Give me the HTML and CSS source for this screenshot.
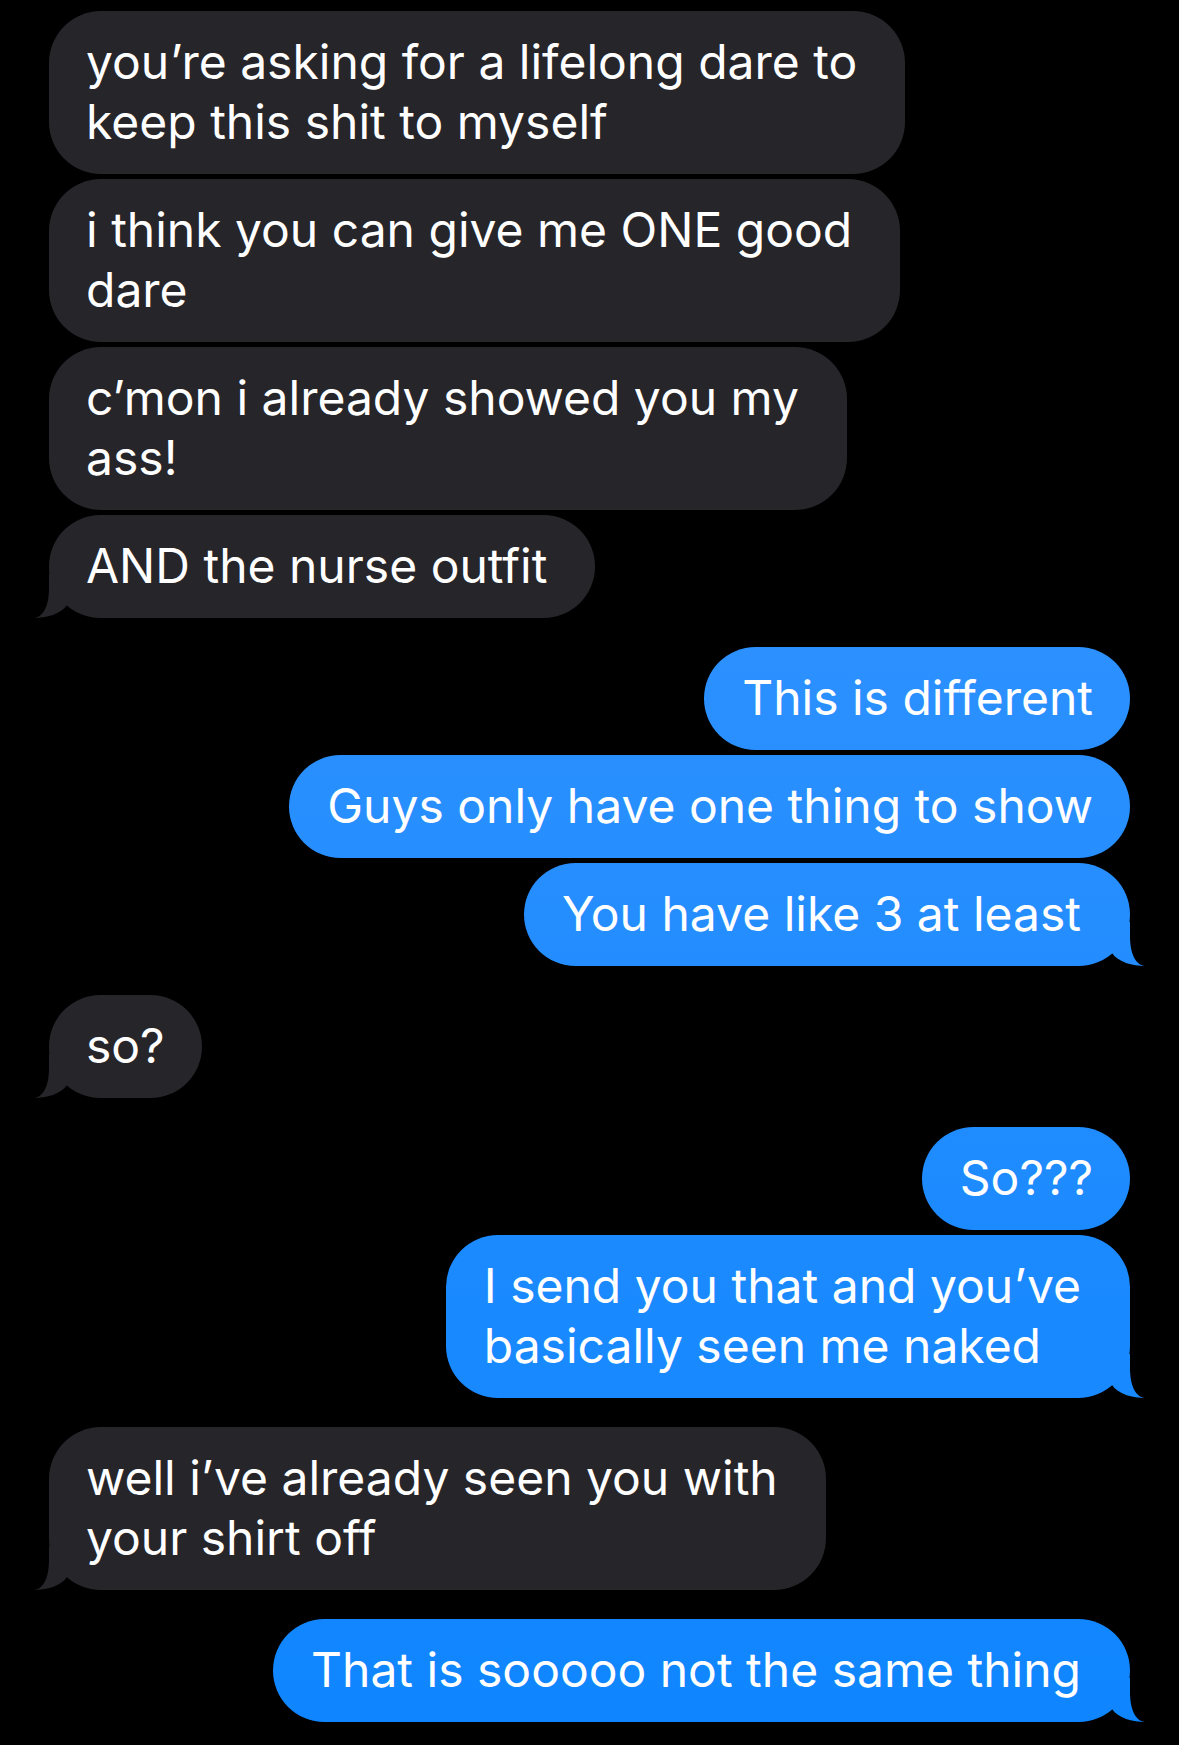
FILE: index.html
```html
<!DOCTYPE html>
<html lang="en">
<head>
<meta charset="utf-8">
<title>Messages</title>
<link rel="stylesheet" href="styles.css">
</head>
<body>
<main class="thread">
  <section class="group in">
    <p class="bubble">you’re asking for a lifelong dare to<br>keep this shit to myself</p>
    <p class="bubble">i think you can give me ONE good<br>dare</p>
    <p class="bubble">c’mon i already showed you my<br>ass!</p>
    <p class="bubble tail">AND the nurse outfit</p>
  </section>
  <section class="group out">
    <p class="bubble">This is different</p>
    <p class="bubble">Guys only have one thing to show</p>
    <p class="bubble tail">You have like 3 at least</p>
  </section>
  <section class="group in">
    <p class="bubble tail short">so?</p>
  </section>
  <section class="group out">
    <p class="bubble">So???</p>
    <p class="bubble tail">I send you that and you’ve<br>basically seen me naked</p>
  </section>
  <section class="group in">
    <p class="bubble tail">well i’ve already seen you with<br>your shirt off</p>
  </section>
  <section class="group out">
    <p class="bubble tail">That is sooooo not the same thing</p>
  </section>
</main>
</body>
</html>
```
FILE: styles.css
```css
html,
body {
  margin: 0;
  padding: 0;
  background: #000;
}

body {
  width: 1179px;
  height: 1745px;
  overflow: hidden;
  font-family: Inter, "Noto Sans", "Liberation Sans", sans-serif;
}

.thread {
  display: flex;
  flex-direction: column;
  gap: 29px;
  padding: 11px 49px 0;
}

.group {
  display: flex;
  flex-direction: column;
  gap: 5px;
}

.group.in {
  align-items: flex-start;
}

.group.out {
  align-items: flex-end;
}

.bubble {
  position: relative;
  isolation: isolate;
  margin: 0;
  font-size: 48px;
  line-height: 60px;
  font-weight: 400;
  color: #fff;
  white-space: nowrap;
  border-radius: 52px;
}

.in .bubble {
  background: #262529;
  padding: 21px 48px 22px 37px;
}

.in .bubble.short {
  padding-right: 37px;
}

.out .bubble {
  background: linear-gradient(to bottom, #3e97ff 0px, #0e85ff 1745px) fixed;
  padding: 21px 37px 22px 38px;
}

.out .bubble.tail {
  padding-right: 49px;
}

.bubble.tail::before {
  content: "";
  position: absolute;
  z-index: -1;
  bottom: 0;
  width: 40px;
  height: 44px;
}

.in .bubble.tail::before {
  left: -16px;
  background: #262529;
  clip-path: path("M 0 44 C 9 44, 16 34, 16 14 L 16 0 L 40 0 L 40 30 L 34 31 C 28 40, 14 44, 0 44 Z");
}

.out .bubble.tail::before {
  right: -16px;
  background: linear-gradient(to bottom, #3e97ff 0px, #0e85ff 1745px) fixed;
  clip-path: path("M 40 44 C 31 44, 24 34, 24 14 L 24 0 L 0 0 L 0 30 L 6 31 C 12 40, 26 44, 40 44 Z");
}
```
